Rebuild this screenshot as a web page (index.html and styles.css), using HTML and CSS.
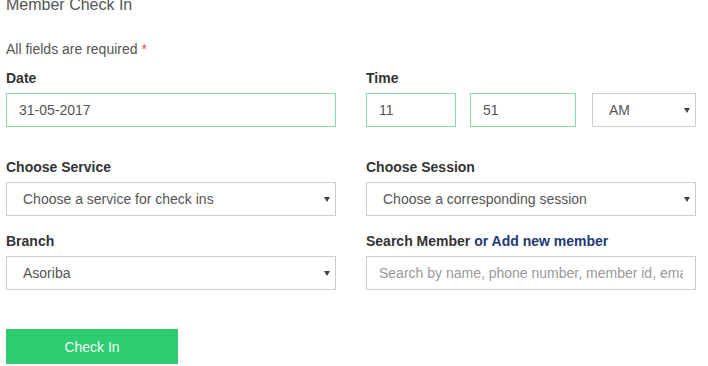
FILE: index.html
```html
<!DOCTYPE html>
<html lang="en">
<head>
<meta charset="UTF-8">
<title>Member Check In</title>
<link rel="stylesheet" href="styles.css">
</head>
<body>
	<div class="page">
		<h3 class="title">Member Check In</h3>
		<p class="note">All fields are required <span class="req">*</span></p>
		<form class="form">
			<div class="group">
				<label>Date</label>
				<input type="text" class="field ok" value="31-05-2017">
			</div>
			<div class="group">
				<label>Time</label>
				<div class="time">
					<input type="text" class="field ok hour" value="11">
					<input type="text" class="field ok minute" value="51">
					<div class="pick ampm">
						<select class="field"><option>AM</option><option>PM</option></select>
					</div>
				</div>
			</div>
			<div class="group">
				<label>Choose Service</label>
				<div class="pick">
					<select class="field"><option>Choose a service for check ins</option></select>
				</div>
			</div>
			<div class="group">
				<label>Choose Session</label>
				<div class="pick">
					<select class="field"><option>Choose a corresponding session</option></select>
				</div>
			</div>
			<div class="group">
				<label>Branch</label>
				<div class="pick">
					<select class="field"><option>Asoriba</option></select>
				</div>
			</div>
			<div class="group">
				<label>Search Member <a href="#" class="add">or Add new member</a></label>
				<input type="text" class="field search" placeholder="Search by name, phone number, member id, email">
			</div>
		</form>
		<button type="button" class="btn">Check In</button>
	</div>
</body>
</html>
```

FILE: styles.css
```css
body{
	margin:0;
	background:#fff;
	font-family:"Liberation Sans", Arial, sans-serif;
	color:#555;
	font-size:14px;
	overflow:hidden;
}
.page{
	padding-left:6px;
	width:691px;
}
.title{
	font-size:16px;
	font-weight:normal;
	line-height:20px;
	margin:-5px 0 0 0;
	color:#555;
}
.note{
	margin:25px 0 0 0;
	line-height:18px;
}
.req{
	color:#e74c3c;
}
.form{
	display:grid;
	grid-template-columns:330px 330px;
	column-gap:30px;
	margin-top:11px;
}
.group{
	display:flex;
	flex-direction:column;
	margin-bottom:16px;
}
.group:nth-child(1),
.group:nth-child(2){
	margin-bottom:31px;
}
.group:nth-child(5),
.group:nth-child(6){
	margin-bottom:15px;
}
label{
	font-weight:bold;
	color:#333;
	line-height:18px;
	margin-bottom:6px;
}
.add{
	color:#1f3a73;
	text-decoration:none;
}
.field{
	box-sizing:border-box;
	height:34px;
	width:100%;
	border:1px solid #ccc;
	background:#fff;
	font-family:"Liberation Sans", Arial, sans-serif;
	font-size:14px;
	color:#555;
	padding:0 12px;
	margin:0;
	border-radius:0;
	outline:none;
}
.field.ok{
	border-color:#86d9a8;
}
.field::placeholder{
	color:#999;
}
select.field{
	appearance:none;
	-webkit-appearance:none;
	padding-left:16px;
}
.pick{
	position:relative;
}
.pick::after{
	content:"";
	position:absolute;
	right:6px;
	top:15px;
	border-left:3px solid transparent;
	border-right:3px solid transparent;
	border-top:5px solid #444;
}
.time{
	display:flex;
}
.hour{
	width:90px;
	margin-right:14px;
}
.minute{
	width:106px;
	margin-right:16px;
}
.ampm{
	width:105px;
}
.btn{
	display:block;
	margin-top:24px;
	width:172px;
	height:35px;
	border:none;
	border-radius:0;
	background:#2ecc71;
	color:#f1f8f3;
	font-family:"Liberation Sans", Arial, sans-serif;
	font-size:14px;
	cursor:pointer;
}
```
